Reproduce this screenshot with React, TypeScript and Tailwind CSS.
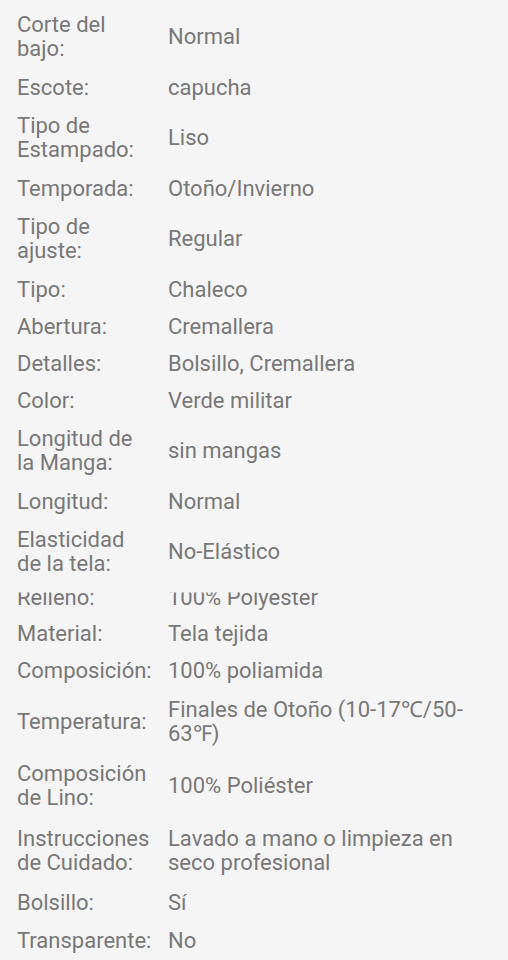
const specs: { label: string[]; value: string[]; pad?: string; clipped?: boolean }[] = [
  { label: ["Corte del", "bajo:"], value: ["Normal"], pad: "py-[8px]" },
  { label: ["Escote:"], value: ["capucha"] },
  { label: ["Tipo de", "Estampado:"], value: ["Liso"], pad: "py-[8px]" },
  { label: ["Temporada:"], value: ["Otoño/Invierno"] },
  { label: ["Tipo de", "ajuste:"], value: ["Regular"], pad: "py-[8px]" },
  { label: ["Tipo:"], value: ["Chaleco"] },
  { label: ["Abertura:"], value: ["Cremallera"] },
  { label: ["Detalles:"], value: ["Bolsillo, Cremallera"] },
  { label: ["Color:"], value: ["Verde militar"] },
  { label: ["Longitud de", "la Manga:"], value: ["sin mangas"], pad: "py-[8px]" },
  { label: ["Longitud:"], value: ["Normal"] },
  { label: ["Elasticidad", "de la tela:"], value: ["No-Elástico"], pad: "py-[8px]" },
  { label: ["Relleno:"], value: ["100% Polyester"], clipped: true },
  { label: ["Material:"], value: ["Tela tejida"] },
  { label: ["Composición:"], value: ["100% poliamida"] },
  { label: ["Temperatura:"], value: ["Finales de Otoño (10-17℃/50-", "63℉)"], pad: "py-[8.5px]" },
  { label: ["Composición", "de Lino:"], value: ["100% Poliéster"], pad: "py-[8px]" },
  { label: ["Instrucciones", "de Cuidado:"], value: ["Lavado a mano o limpieza en", "seco profesional"], pad: "py-[9px]" },
  { label: ["Bolsillo:"], value: ["Sí"], pad: "py-[7px]" },
  { label: ["Transparente:"], value: ["No"] },
];

function Lines({ lines }: { lines: string[] }) {
  return (
    <>
      {lines.map((l, i) => (
        <span key={i} className="block whitespace-nowrap">
          {l}
        </span>
      ))}
    </>
  );
}

export default function App() {
  return (
    <div className="min-h-screen bg-[#f5f5f5] pt-[5px] font-['Roboto',sans-serif] text-[22px] leading-[24px] text-[#787878]">
      {specs.map((s) =>
        s.clipped ? (
          // row partly covered by the one above it
          <div key={s.label.join(" ")} className="flex h-[31px] overflow-hidden pl-[17px] pr-[17px]">
            <div className="mt-[1.6px] flex w-full [clip-path:inset(7px_0_0_0)]">
              <div className="w-[151px] shrink-0">
                <Lines lines={s.label} />
              </div>
              <div className="flex-1">
                <Lines lines={s.value} />
              </div>
            </div>
          </div>
        ) : (
          <div
            key={s.label.join(" ")}
            className={`flex items-center pl-[17px] pr-[17px] ${s.pad ?? "py-[6.5px]"}`}
          >
            <div className="w-[151px] shrink-0">
              <Lines lines={s.label} />
            </div>
            <div className="flex-1">
              <Lines lines={s.value} />
            </div>
          </div>
        )
      )}
    </div>
  );
}
